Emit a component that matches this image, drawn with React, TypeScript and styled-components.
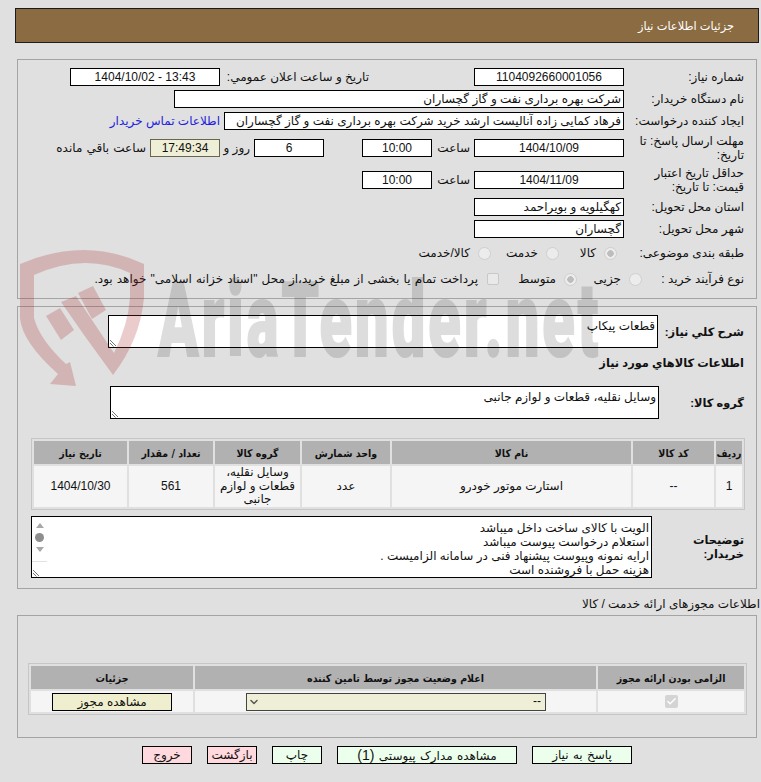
import styled, { createGlobalStyle } from "styled-components";
import { Check, ChevronDown } from "lucide-react";

const GlobalStyle = createGlobalStyle`
  html, body {
    margin: 0;
    padding: 0;
    background: #e0e0e0;
    overflow: hidden;
  }
  body {
    font-family: "Liberation Sans", "DejaVu Sans", sans-serif;
    font-size: 12px;
    color: #111;
  }
`;

const Page = styled.div`
  position: relative;
  width: 761px;
  height: 782px;
  padding-top: 8px;
  box-sizing: border-box;
  direction: rtl;
  overflow: hidden;
`;

const Header = styled.div`
  margin: 0 2px 0 15px;
  height: 35px;
  box-sizing: border-box;
  background: #8b6b41;
  border: 1px solid #1c1c1c;
  color: #fff;
  display: flex;
  align-items: center;
  padding-right: 24px;
  font-size: 11.4px;
`;

const Panel = styled.div<{ $top: number; $pad: string }>`
  margin: ${(p) => p.$top}px 4px 0 17px;
  padding: ${(p) => p.$pad};
  border: 1px solid #a4a4a4;
  box-sizing: border-box;
`;

const Rows = styled.div`
  display: flex;
  flex-direction: column;
  gap: 4px;
`;

const Row = styled.div<{ $h?: number; $inset?: number; $top?: number }>`
  display: flex;
  align-items: center;
  height: ${(p) => p.$h ?? 18}px;
  padding-right: ${(p) => p.$inset ?? 0}px;
  margin-top: ${(p) => p.$top ?? 0}px;
`;

const Label = styled.div<{ $w?: number; $bold?: boolean }>`
  flex: none;
  width: ${(p) => p.$w ?? 120}px;
  line-height: 14px;
  font-size: ${(p) => (p.$bold ? "11.4px" : "12px")};
  font-weight: ${(p) => (p.$bold ? 700 : 400)};
`;

const SideLabel = styled.div<{ $w: number; $m: number }>`
  flex: none;
  width: ${(p) => p.$w}px;
  margin-right: ${(p) => p.$m}px;
`;

const Unit = styled.div<{ $w: number }>`
  flex: none;
  width: ${(p) => p.$w}px;
  padding-right: 4px;
  box-sizing: border-box;
`;

const Field = styled.div<{ $w: number; $center?: boolean; $m?: number; $tint?: boolean; $ltr?: boolean }>`
  flex: none;
  width: ${(p) => p.$w}px;
  height: 18px;
  line-height: 16px;
  margin-right: ${(p) => p.$m ?? 0}px;
  box-sizing: border-box;
  padding: 0 2px;
  border: 1px solid ${(p) => (p.$tint ? "#66664f" : "#000")};
  background: ${(p) => (p.$tint ? "#efefd8" : "#fff")};
  direction: ${(p) => (p.$ltr ? "ltr" : "rtl")};
  text-align: ${(p) => (p.$center ? "center" : "right")};
  white-space: nowrap;
  overflow: hidden;
`;

const ContactLink = styled.a`
  margin-right: 4px;
  color: #2222dd;
  white-space: nowrap;
`;

const Plain = styled.span<{ $m?: number }>`
  margin-right: ${(p) => p.$m ?? 0}px;
  white-space: nowrap;
  word-spacing: 0.8px;
`;

const Radio = styled.input.attrs({ type: "radio", disabled: true })<{ $m: number }>`
  appearance: none;
  flex: none;
  width: 13px;
  height: 13px;
  margin: 0 ${(p) => p.$m}px 0 8px;
  border: 1px solid #cfcfcf;
  border-radius: 50%;
  background: #ececec;
  position: relative;
  &:checked {
    background: radial-gradient(circle, #bdbdbd 0 3px, #ececec 3.5px);
  }
`;

const Tick = styled.input.attrs({ type: "checkbox", disabled: true })<{ $m: number }>`
  appearance: none;
  flex: none;
  width: 12px;
  height: 12px;
  margin: 0 ${(p) => p.$m}px 0 9px;
  border: 1px solid #c8c8c8;
  border-radius: 2px;
  background: #e9e9e9;
`;

const Choice = styled.span<{ $w: number }>`
  flex: none;
  width: ${(p) => p.$w}px;
  white-space: nowrap;
`;

const TextBox = styled.div<{ $w: number }>`
  position: relative;
  flex: none;
  width: ${(p) => p.$w}px;
  height: 33px;
  box-sizing: border-box;
  padding: 3px 2px;
  border: 1px solid #000;
  background: #fff;
  line-height: 14px;
`;

const Grip = styled.svg`
  position: absolute;
  left: 0;
  bottom: 0;
  width: 9px;
  height: 9px;
`;

const SectionTitle = styled.div`
  margin-top: 8px;
  padding-right: 12px;
  height: 14px;
  line-height: 14px;
  font-size: 11.4px;
  font-weight: 700;
`;

const Table = styled.table<{ $w: number; $mr: number; $mt: number }>`
  width: ${(p) => p.$w}px;
  margin: ${(p) => p.$mt}px ${(p) => p.$mr}px 0 0;
  table-layout: fixed;
  border-collapse: separate;
  border-spacing: 2px;
  border: 1px solid #c6c6c6;
  font-size: 12px;
  color: #111;
`;

const Th = styled.th<{ $w?: number }>`
  ${(p) => (p.$w ? `width: ${p.$w}px;` : "")}
  height: 23px;
  padding: 0;
  background: #b1b1b1;
  font-family: "DejaVu Sans Condensed", "DejaVu Sans", sans-serif;
  font-size: 10.5px;
  font-weight: 700;
  text-align: center;
`;

const Td = styled.td<{ $h: number }>`
  height: ${(p) => p.$h}px;
  padding: 0;
  background: #f5f5f5;
  text-align: center;
  line-height: 13.5px;
  overflow: hidden;
`;

const NotesRow = styled.div`
  display: flex;
  align-items: center;
  margin-top: 6px;
  padding-right: 12px;
`;

const Notes = styled.div`
  position: relative;
  display: flex;
  flex: none;
  width: 621px;
  height: 62px;
  box-sizing: border-box;
  border: 1px solid #000;
  background: #fff;
`;

const NotesText = styled.div`
  flex: 1;
  padding: 4px 2px 0 0;
  line-height: 14px;
  white-space: nowrap;
`;

const ScrollStrip = styled.div`
  flex: none;
  width: 15px;
  box-sizing: border-box;
  display: flex;
  flex-direction: column;
  align-items: center;
  padding-top: 6px;
  gap: 5px;
`;

const ArrowUp = styled.div`
  width: 0;
  height: 0;
  border: 4.5px solid transparent;
  border-top: 0;
  border-bottom: 5px solid #a8a8a8;
`;

const ArrowDown = styled.div`
  width: 0;
  height: 0;
  border: 4.5px solid transparent;
  border-bottom: 0;
  border-top: 5px solid #a8a8a8;
`;

const Thumb = styled.div`
  width: 9px;
  height: 9px;
  border-radius: 50%;
  background: #8e8e8e;
`;

const StripLine = styled.div`
  width: 100%;
  margin-top: 4px;
  border-top: 1px solid #e2e2e2;
`;

const LicenceTitle = styled.div`
  margin-top: 8px;
  padding-right: 1px;
  height: 14px;
  line-height: 14px;
`;

const Select = styled.div`
  display: flex;
  align-items: center;
  justify-content: space-between;
  width: 300px;
  height: 18px;
  margin: 0 50px 0 auto;
  padding: 0 4px 0 1px;
  box-sizing: border-box;
  border: 1px solid #444;
  background: #efefd8;
`;

const ViewButton = styled.button`
  display: block;
  width: 120px;
  height: 18px;
  margin: 0 auto;
  padding: 0;
  border: 1px solid #000;
  background: #efefcf;
  color: #111;
  font: inherit;
  line-height: 14px;
`;

const CheckMark = styled.span`
  display: inline-flex;
  align-items: center;
  justify-content: center;
  width: 13px;
  height: 13px;
  border-radius: 2px;
  background: #d4d4d4;
  color: #fff;
  vertical-align: middle;
`;

const Actions = styled.div`
  display: flex;
  justify-content: center;
  gap: 15px;
  margin: 8px 2px 0 15px;
`;

const Action = styled.button<{ $w: number; $danger?: boolean }>`
  width: ${(p) => p.$w}px;
  height: 18px;
  padding: 0;
  border: 1px solid #000;
  background: ${(p) => (p.$danger ? "#ffd9dd" : "#ecffec")};
  color: #111;
  font: inherit;
  word-spacing: 1px;
  line-height: 14px;
`;

const Count = styled.span`
  font-size: 14px;
`;

const Shield = styled.svg`
  position: absolute;
  left: 0;
  top: 0;
  width: 200px;
  height: 400px;
  pointer-events: none;
`;

const Watermark = styled.div`
  position: absolute;
  left: 158px;
  top: 284px;
  direction: ltr;
  font-family: Roboto, sans-serif;
  font-size: 96px;
  line-height: 68px;
  font-weight: 900;
  letter-spacing: 5px;
  color: #000;
  opacity: 0.13;
  -webkit-text-stroke: 2px #000;
  transform: scale(0.62, 1.08);
  transform-origin: left top;
  white-space: nowrap;
  pointer-events: none;
`;

const ResizeGrip = () => (
  <Grip viewBox="0 0 9 9">
    <path d="M1 2l6 6M1 5l3.500 3.500" stroke="#777" strokeWidth="1" fill="none" />
  </Grip>
);

const goodsColumns = [
  { title: "ردیف", width: 26 },
  { title: "کد کالا", width: 81 },
  { title: "نام کالا", width: 239 },
  { title: "واحد شمارش", width: 88 },
  { title: "گروه کالا", width: 85 },
  { title: "تعداد / مقدار", width: 84 },
  { title: "تاریخ نیاز", width: 93 },
];

export default function App() {
  return (
    <Page>
      <GlobalStyle />
      <Header>جزئیات اطلاعات نیاز</Header>

      <Panel $top={16} $pad="8px 12px 8px 0">
        <Rows>
          <Row>
            <Label>شماره نیاز:</Label>
            <Field $w={150} $center>1104092660001056</Field>
            <SideLabel $w={149} $m={105}>تاریخ و ساعت اعلان عمومي:</SideLabel>
            <Field $w={150} $center $ltr>1404/10/02 - 13:43</Field>
          </Row>
          <Row>
            <Label>نام دستگاه خریدار:</Label>
            <Field $w={450}>شرکت بهره برداری نفت و گاز گچساران</Field>
          </Row>
          <Row>
            <Label>ایجاد کننده درخواست:</Label>
            <Field $w={400}>فرهاد کمایی زاده آنالیست ارشد خرید شرکت بهره برداری نفت و گاز گچساران</Field>
            <ContactLink>اطلاعات تماس خریدار</ContactLink>
          </Row>
          <Row $h={28}>
            <Label>مهلت ارسال پاسخ: تا تاریخ:</Label>
            <Field $w={150} $center>1404/10/09</Field>
            <Unit $w={42}>ساعت</Unit>
            <Field $w={70} $center>10:00</Field>
            <Field $w={70} $center $m={38}>6</Field>
            <Unit $w={34}>روز و</Unit>
            <Field $w={70} $center $tint>17:49:34</Field>
            <Plain $m={4}>ساعت باقي مانده</Plain>
          </Row>
          <Row $h={28}>
            <Label>حداقل تاریخ اعتبار قیمت: تا تاریخ:</Label>
            <Field $w={150} $center>1404/11/09</Field>
            <Unit $w={42}>ساعت</Unit>
            <Field $w={70} $center>10:00</Field>
          </Row>
          <Row>
            <Label>استان محل تحویل:</Label>
            <Field $w={150}>کهگیلویه و بویراحمد</Field>
          </Row>
          <Row>
            <Label>شهر محل تحویل:</Label>
            <Field $w={150}>گچساران</Field>
          </Row>
          <Row $h={22}>
            <Label>طبقه بندی موضوعی:</Label>
            <Radio $m={7} defaultChecked />
            <Choice $w={37}>کالا</Choice>
            <Radio $m={0} />
            <Choice $w={47}>خدمت</Choice>
            <Radio $m={0} />
            <Choice $w={60}>کالا/خدمت</Choice>
          </Row>
          <Row $h={22}>
            <Label $w={102}>نوع فرآیند خرید :</Label>
            <Radio $m={0} />
            <Choice $w={44}>جزیی</Choice>
            <Radio $m={0} defaultChecked />
            <Choice $w={57}>متوسط</Choice>
            <Tick $m={0} />
            <Plain>پرداخت تمام یا بخشی از مبلغ خرید،از محل "اسناد خزانه اسلامی" خواهد بود.</Plain>
          </Row>
        </Rows>
      </Panel>

      <Panel $top={7} $pad="8px 0 10px 0">
        <Row $h={33} $inset={12}>
          <Label $w={86} $bold>شرح کلي نياز:</Label>
          <TextBox $w={550}>
            قطعات پیکاپ
            <ResizeGrip />
          </TextBox>
        </Row>
        <SectionTitle>اطلاعات کالاهاي مورد نياز</SectionTitle>
        <Row $h={33} $inset={12} $top={16}>
          <Label $w={85} $bold>گروه کالا:</Label>
          <TextBox $w={549}>
            وسایل نقلیه، قطعات و لوازم جانبی
            <ResizeGrip />
          </TextBox>
        </Row>
        <Table $w={714} $mr={11} $mt={19}>
          <thead>
            <tr>
              {goodsColumns.map((c) => (
                <Th key={c.title} $w={c.width}>{c.title}</Th>
              ))}
            </tr>
          </thead>
          <tbody>
            <tr>
              <Td $h={41}>1</Td>
              <Td $h={41}>--</Td>
              <Td $h={41}>استارت موتور خودرو</Td>
              <Td $h={41}>عدد</Td>
              <Td $h={41}>وسایل نقلیه، قطعات و لوازم جانبی</Td>
              <Td $h={41}>561</Td>
              <Td $h={41}>1404/10/30</Td>
            </tr>
          </tbody>
        </Table>
        <NotesRow>
          <Label $w={92} $bold>توضیحات خریدار:</Label>
          <Notes>
            <NotesText>
              الویت با کالای ساخت داخل میباشد
              <br />
              استعلام درخواست پیوست میباشد
              <br />
              ارایه نمونه وپیوست پیشنهاد فنی در سامانه الزامیست .
              <br />
              هزینه حمل با فروشنده است
            </NotesText>
            <ScrollStrip>
              <ArrowUp />
              <Thumb />
              <ArrowDown />
              <StripLine />
            </ScrollStrip>
            <ResizeGrip />
          </Notes>
        </NotesRow>
      </Panel>

      <LicenceTitle>اطلاعات مجوزهای ارائه خدمت / کالا</LicenceTitle>
      <Panel $top={4} $pad="47px 0 22px 0">
        <Table $w={719} $mr={9} $mt={0}>
          <thead>
            <tr>
              <Th $w={146}>الزامی بودن ارائه مجوز</Th>
              <Th $w={401}>اعلام وضعیت مجوز توسط تامین کننده</Th>
              <Th $w={162}>جزئیات</Th>
            </tr>
          </thead>
          <tbody>
            <tr>
              <Td $h={21}>
                <CheckMark>
                  <Check size={11} strokeWidth={3} />
                </CheckMark>
              </Td>
              <Td $h={21}>
                <Select>
                  <span>--</span>
                  <ChevronDown size={12} strokeWidth={3} color="#555" />
                </Select>
              </Td>
              <Td $h={21}>
                <ViewButton>مشاهده مجوز</ViewButton>
              </Td>
            </tr>
          </tbody>
        </Table>
      </Panel>

      <Actions>
        <Action $w={100}>پاسخ به نیاز</Action>
        <Action $w={180}>مشاهده مدارک پیوستی <Count>(1)</Count></Action>
        <Action $w={50}>چاپ</Action>
        <Action $w={50} $danger>بازگشت</Action>
        <Action $w={50} $danger>خروج</Action>
      </Actions>

      <Shield viewBox="0 0 200 400">
        <g fill="rgba(170, 40, 40, 0.24)">
          <path d="M20 264Q85 236 144 264V298Q140 340 113 375L84 335L61 302L76 296L92 320L114 353Q128 325 130 298V273Q85 252 34 275V318Q40 340 66 364L70 362L76 386L50 384L58 374Q22 342 20 318Z" />
          <path d="M46 316L60 308L74 330L61 340Z" />
          <path d="M78 293L93 286L106 310L92 319Z" />
        </g>
      </Shield>
      <Watermark>AriaTender.net</Watermark>
    </Page>
  );
}
